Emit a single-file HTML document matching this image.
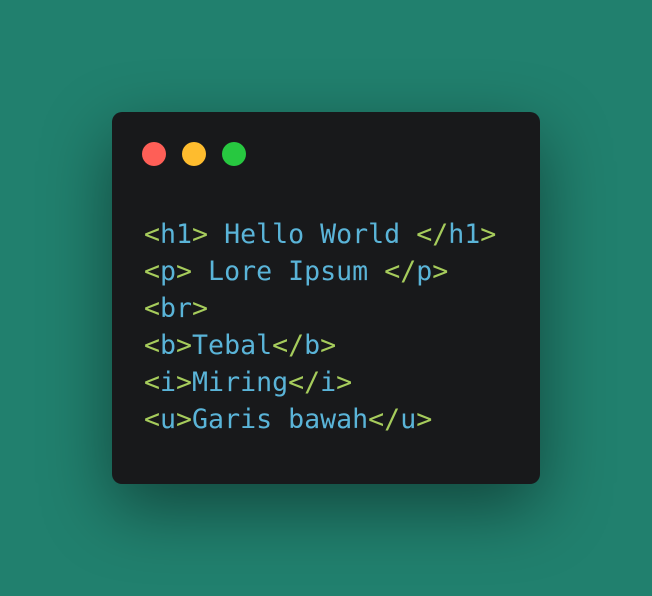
<!DOCTYPE html>
<html><head><style>
html,body{margin:0;padding:0;}
body{width:652px;height:596px;background:#21806e;position:relative;overflow:hidden;}
.card{position:absolute;left:112px;top:112px;width:428px;height:372px;background:#18191b;border-radius:10px;box-shadow:0 24px 70px rgba(0,0,0,0.45);}
.dot{position:absolute;top:30px;width:24px;height:24px;border-radius:50%;}
pre{position:absolute;left:32px;top:104px;margin:0;font-family:"DejaVu Sans Mono","Liberation Mono",monospace;font-size:26.6px;line-height:37px;color:#5ab4d8;}
.g{color:#a6cc5c;}
</style></head><body>
<div class="card">
<div class="dot" style="left:30px;background:#fe5f57"></div>
<div class="dot" style="left:70px;background:#febc2e"></div>
<div class="dot" style="left:110px;background:#27c840"></div>
<pre><span class="g">&lt;</span>h1<span class="g">&gt;</span> Hello World <span class="g">&lt;/</span>h1<span class="g">&gt;</span>
<span class="g">&lt;</span>p<span class="g">&gt;</span> Lore Ipsum <span class="g">&lt;/</span>p<span class="g">&gt;</span>
<span class="g">&lt;</span>br<span class="g">&gt;</span>
<span class="g">&lt;</span>b<span class="g">&gt;</span>Tebal<span class="g">&lt;/</span>b<span class="g">&gt;</span>
<span class="g">&lt;</span>i<span class="g">&gt;</span>Miring<span class="g">&lt;/</span>i<span class="g">&gt;</span>
<span class="g">&lt;</span>u<span class="g">&gt;</span>Garis bawah<span class="g">&lt;/</span>u<span class="g">&gt;</span></pre>
</div>
</body></html>
